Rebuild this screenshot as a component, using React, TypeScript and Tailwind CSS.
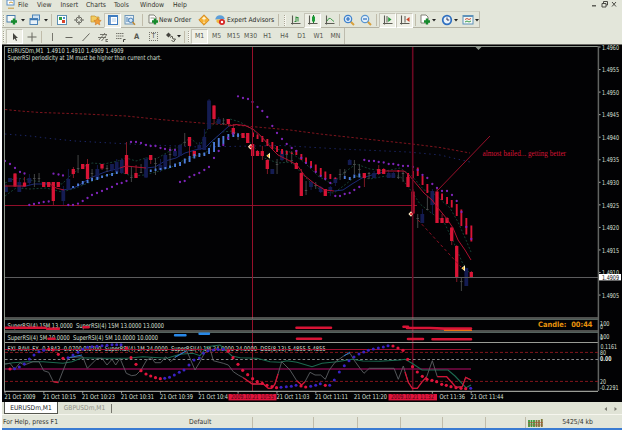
import React from "react";

const UI_FONT = "font-['DejaVu_Sans_Condensed','DejaVu_Sans',sans-serif]";

const RED = "#d81436";
const NAVY = "#141c52";
const GRAY = "#4a4c4c";

type Candle = [x: number, top: number, bottom: number, wickTop: number, wickBottom: number];

const redCandles: Candle[] = [
  [15, 173.5, 186.5, 173, 187],
  [24.5, 182.5, 186.5, 177, 187],
  [43.7, 182, 187, 182, 187],
  [48.7, 182, 187, 182, 187],
  [53.3, 182, 201, 182, 205],
  [58.3, 182, 187, 182, 187],
  [73.3, 169, 174, 167, 178],
  [82.7, 164, 169, 164, 169],
  [87.5, 164, 179, 159, 180],
  [102, 164, 168.5, 164, 170],
  [126.5, 155, 174, 142, 174],
  [136, 173, 178, 165, 178],
  [150.7, 155, 160, 155, 164],
  [189.5, 137, 146, 137, 156],
  [194.3, 151, 156, 151, 156],
  [214, 105.5, 119, 105, 124],
  [228.3, 119, 124, 119, 126],
  [233.3, 128, 134, 124, 136],
  [243, 133, 138, 133, 138],
  [247.7, 133, 143, 133, 143],
  [252.6, 144, 156, 144, 156],
  [257.5, 151, 156, 150, 156],
  [262.3, 151, 156, 146, 160],
  [267.3, 160, 169, 159, 174],
  [296.3, 163, 169, 162, 169],
  [301.3, 173, 196, 169, 196],
  [325.3, 189, 196, 189, 196],
  [364.3, 173, 178, 173, 187],
  [378.7, 169, 174, 165, 175],
  [383.7, 169, 174, 168, 174],
  [408, 177, 187, 177, 187],
  [413, 191.5, 213.5, 189, 214],
  [437, 191.5, 223, 189, 223],
  [442, 218, 223, 214, 223],
  [447, 218, 223, 217, 223],
  [451.7, 227.5, 241, 227, 245],
  [456.7, 246, 277, 245, 282],
  [471.3, 272, 277, 271, 278],
];

const navyCandles: Candle[] = [
  [6, 186.5, 192, 184, 192],
  [10, 178, 182, 178, 182],
  [19.3, 182, 192, 178, 192],
  [29.3, 178, 183, 174, 186],
  [63.3, 190, 201, 186, 205],
  [68.3, 179, 190, 169, 190],
  [97.3, 169, 179, 165, 179],
  [112, 164, 170, 164, 172],
  [116.7, 162, 172, 159, 172],
  [121.7, 160, 173, 158, 174],
  [146, 159, 177.5, 157, 178],
  [160.5, 165, 170, 159, 172],
  [165.3, 155, 169, 154, 170],
  [175, 151, 156, 150, 157],
  [180, 145, 156, 144, 156],
  [199.3, 145, 150, 142, 150],
  [204.3, 137, 150, 129, 150],
  [209, 100.5, 129, 99, 129],
  [218.7, 119, 124, 117, 124],
  [272.3, 169, 174, 169, 174],
  [282, 151, 160, 150, 161],
  [311, 182, 187, 181, 190],
  [320.7, 187, 192, 186, 193],
  [330.3, 187, 191, 186, 196],
  [335.3, 178, 183, 177, 186],
  [349.7, 160, 165, 159, 165],
  [374, 173, 178, 171, 178],
  [388.7, 173, 178, 171, 178],
  [393.3, 173, 178, 172, 178],
  [422.3, 214, 223, 209, 223],
  [432.3, 191, 205, 189, 214],
  [466.3, 268, 286, 268, 286],
];

const grayCandles: Candle[] = [
  [34.3, 178, 179, 174, 187],
  [39, 178, 179, 173, 182],
  [78, 168, 169, 155, 173],
  [92, 173, 174, 169, 178],
  [107, 168, 169, 165, 172],
  [131.3, 177, 178, 167, 182],
  [141, 172, 173, 164, 173],
  [155.5, 163, 164, 158, 175],
  [170, 154, 155, 147, 167],
  [184.7, 142, 143, 133, 146],
  [223.3, 123, 124, 118, 125],
  [238, 135, 136, 133, 140],
  [277, 164, 165, 159, 174],
  [286.7, 154, 155, 150, 162],
  [291.7, 160, 161, 151, 164],
  [306, 190, 191, 181, 195],
  [315.7, 185, 186, 182, 189],
  [340, 174, 175, 169, 180],
  [344.7, 172, 173, 169, 177],
  [354.3, 164, 165, 160, 174],
  [359.3, 169, 170, 164, 175],
  [369, 173, 174, 172, 179],
  [398.3, 177, 178, 171, 179],
  [403, 173, 174, 171, 182],
  [417.7, 218, 219, 214, 228],
  [427.3, 209, 210, 196, 210],
  [461.3, 281, 282, 277, 291],
];

// x, top, bottom
const blueRibbon = [
  [73, 186, 188], [78, 183.5, 186], [82.7, 181, 184.5], [87.5, 180, 183], [92, 178, 181],
  [97.3, 177, 180], [102, 175.5, 178], [107, 174, 176.5], [112, 173, 176], [116.7, 171.5, 174],
  [150.7, 169.5, 172], [155.5, 168.5, 171], [160.5, 168, 170], [165.3, 167, 169], [170, 165.5, 168],
  [175, 163.5, 167], [180, 162, 166], [184.7, 158.5, 163.5], [189.5, 156, 162], [194.3, 154, 158.5],
  [199.3, 153, 157], [204.3, 152.5, 156], [209, 148, 154], [214, 142, 152], [218.7, 138, 147],
  [223.3, 136, 144], [228.3, 134, 140], [233.3, 132.5, 137], [238, 133.5, 137], [344.7, 176, 179],
  [349.7, 177, 180], [354.3, 174.5, 178], [359.3, 173.5, 177.5],
];

const redRibbon = [
  [253, 132.5, 137], [257.5, 134.5, 139], [262.3, 136, 142], [267.3, 139, 146], [272.3, 142, 149],
  [277, 146, 152], [282, 149, 154], [286.7, 151, 154], [291.7, 152.5, 154], [296.3, 150, 155], [301.3, 154, 160],
  [306, 157.5, 163], [311, 161, 167], [315.7, 164.5, 172], [320.7, 168, 176], [325.3, 171.5, 179],
  [330.3, 174, 179], [335.3, 177.5, 179], [398.3, 170, 172], [408, 173, 186], [413, 171, 178],
  [417.7, 167.5, 176], [422.5, 176, 185], [427.3, 184, 193], [437, 192, 196], [442, 193.5, 200],
  [447, 197, 204], [451.7, 200, 207.5], [456.7, 204, 216], [461.3, 209.5, 226], [466.3, 218, 234.5],
  [471.3, 225.5, 241.5],
];

const sarDots = [
  [5, 161], [10, 164], [15, 168], [20, 172], [24.5, 173.5], [53.5, 173.7], [58.5, 174.5], [63, 175.5],
  [29.3, 205], [34, 204], [39, 203], [43.7, 202], [48.7, 201.5], [68.3, 205], [73, 205], [78, 203.7],
  [82.7, 201], [87.5, 198], [92, 195], [97, 193], [102, 191], [107, 189], [112, 187], [117, 184],
  [121.7, 183], [126.5, 181], [131, 142], [136, 142], [141, 143], [146, 145], [150.7, 146], [155.5, 146],
  [160.5, 148], [165, 149], [170, 150], [175, 150], [180, 182], [184.7, 181], [189.5, 177], [194.3, 175],
  [199.3, 173], [204.3, 170], [209, 167], [214, 158], [218.7, 151], [223.3, 145], [228, 138], [233, 134],
  [238, 96.3], [243, 98], [248, 99], [252.5, 102], [257.5, 107], [262.3, 111], [267.3, 117], [272.3, 126],
  [277, 133], [282, 139], [286.7, 144], [291.7, 148], [296.3, 151], [301.3, 158], [306, 163], [311, 167],
  [315.7, 172], [320.7, 176], [325.3, 179], [330.3, 183], [335.3, 196], [340, 196], [344.7, 194],
  [349.7, 193], [354.3, 190], [359.3, 187], [364.3, 160], [369, 161], [374, 161], [378.7, 162],
  [383.7, 162.5], [388.7, 164], [393.3, 164], [398.3, 165], [403, 166], [408, 166], [413, 167],
  [417.7, 170], [422.5, 175], [427.3, 178], [432.3, 184], [437, 188], [442, 191], [447, 191], [452, 195],
  [456.7, 201], [461.5, 212], [466.3, 227], [471.3, 239],
];

const dssRed = [
  [10, 369], [48.7, 349], [53.3, 350], [58.3, 354.3], [63, 358.3], [126.5, 348], [131, 357.7], [136, 364.3], [141, 370.7],
  [146, 374], [150.7, 376], [155.5, 377.7], [160.3, 378.7], [228.3, 351.3], [233, 357.7], [238, 364.3],
  [242.7, 370.3], [247.7, 374.7], [252.6, 378.7], [257.3, 381.7], [262.3, 383.3], [267, 385.3],
  [272, 386.7], [276.5, 387.7], [301, 386], [305.7, 387], [325.3, 385.3], [393, 346], [398, 348],
  [403, 350.3], [407.7, 359.3], [412.5, 366.7], [417.3, 372], [422.3, 376.3], [427, 379.3], [432, 380.3],
  [436.7, 381.7], [441.7, 384.3], [446.3, 385.3], [451, 386.7], [456, 387.7], [461, 388.3], [465.7, 388.7],
];

const dssBlue = [
  [14.5, 368.7], [19.3, 367], [24.3, 364], [29.3, 359], [34, 355], [39, 351.7], [43.7, 350.3], [68, 357.7],
  [73, 355], [78, 352.3], [82.7, 349.3], [87.5, 347.3], [92, 346.7], [97, 346.3], [102, 345.7],
  [107, 345.3], [112, 344.7], [116.7, 344.7], [121, 344.7], [164.7, 378.3], [169.5, 377.3], [174.3, 375],
  [179.3, 372.3], [184, 370], [189, 365], [194, 360], [199.3, 358], [203.5, 353.3], [208, 350.7],
  [213.3, 350], [218, 349.3], [223.3, 349.3], [281, 387.3], [286.3, 386.7], [291.3, 386.3], [296, 385.3],
  [310.7, 386.3], [315.7, 385.3], [320.3, 383.7], [329.7, 385.3], [334.3, 380], [339.3, 372],
  [344.3, 365.7], [349, 360.7], [354, 357], [359, 354], [363.7, 352], [368.3, 350.3], [373.3, 349],
  [378.3, 348], [383.3, 347], [388, 345.7], [470.7, 388.3],
];

const priceLabels = [
  "1.4960", "1.4955", "1.4950", "1.4945", "1.4940", "1.4935",
  "1.4930", "1.4925", "1.4920", "1.4915", "1.4910", "1.4905",
];

const timeLabels: [number, string, number][] = [
  [4.5, "21 Oct 2009", 31],
  [43, "21 Oct 10:15", 33],
  [82, "21 Oct 10:23", 33],
  [121, "21 Oct 10:31", 33],
  [160, "21 Oct 10:39", 33],
  [198.5, "21 Oct 10:4", 29.5],
  [276.5, "21 Oct 11:03", 33],
  [315, "21 Oct 11:11", 33],
  [354, "21 Oct 11:20", 33],
  [439.5, "Oct 11:36", 25.5],
  [470.5, "21 Oct 11:44", 33],
];

interface LabelProps {
  x: number;
  y: number;
  w: number;
  children: string;
  fill?: string;
  size?: number;
  className?: string;
}

const Label: React.FC<LabelProps> = ({
  x,
  y,
  w,
  children,
  fill = "#dfe1dc",
  size = 6.7,
  className,
}) => (
  <text
    x={x}
    y={y + 2.4}
    fill={fill}
    fontSize={size}
    textLength={w}
    lengthAdjust="spacingAndGlyphs"
    className={className}
    xmlSpace="preserve"
  >
    {children}
  </text>
);

const Candles: React.FC<{ data: Candle[]; color: string; wick?: string; width?: number }> = ({
  data,
  color,
  wick = color,
  width = 3,
}) => (
  <>
    {data.map(([x, top, bottom, wt, wb]) => (
      <g key={x}>
        <rect x={x - 0.4} y={wt} width={0.9} height={wb - wt} fill={wick} />
        <rect x={x - width / 2} y={top} width={width} height={bottom - top} fill={color} />
      </g>
    ))}
  </>
);

const Bars: React.FC<{ data: number[][]; color: string }> = ({ data, color }) => (
  <>
    {data.map(([x, top, bottom]) => (
      <rect key={x} x={x - 0.9} y={top} width={1.9} height={bottom - top} fill={color} />
    ))}
  </>
);

const Dots: React.FC<{ data: number[][]; color: string; r: number }> = ({ data, color, r }) => (
  <>
    {data.map(([x, y]) => (
      <circle key={`${x}-${y}`} cx={x} cy={y} r={r} fill={color} />
    ))}
  </>
);

const TradeArrow: React.FC<{ x: number; y: number }> = ({ x, y }) => (
  <>
    <path d={`M${x + 2} ${y - 3}v6l-3.6-3z`} fill="#fff6c8" />
    <path d={`M${x + 1} ${y - 1.5}v3l-2-1.5z`} fill="#f0a818" />
  </>
);

const Entry: React.FC<{ x: number; y: number }> = ({ x, y }) => (
  <>
    <path d={`M${x - 2.6} ${y}l2.6-2.8 2 2.8-2 2.8z`} fill="#ffe9c0" />
    <circle cx={x + 0.4} cy={y} r={1.3} fill="#e02030" />
  </>
);

const Chart = () => (
  <svg
    viewBox="2 44 620 358"
    className="block h-[358px] w-[620px] shrink-0 font-['DejaVu_Sans_Condensed','DejaVu_Sans',sans-serif]"
    fill="none"
  >
    <rect x="2" y="44" width="620" height="358" fill="#020204" />
    <path d="M2 44.5h620" stroke="#6b6b66" />

    {/* levels and long averages */}
    <path d="M5 205.5H417" stroke="#900e2a" />
    <path
      d="M5 109.5L20 111 40 112.5 85 114 126 116 160 119.5 207 123.5 240 125.5 290 130 320 134 366 139 412 144 440 147.5 470 153"
      stroke="#8c1620"
      strokeWidth="0.9"
      strokeDasharray="2.4 2"
    />
    <path
      d="M5 134L30 136 50 138.5 75 141 120 143.5 140 144.5 200 147 282 145.5 340 149 408 152 440 155 470 162"
      stroke="#1c2668"
      strokeWidth="1"
      strokeDasharray="1.4 3.6"
    />
    <g stroke="#1a5040" strokeWidth="0.8" strokeDasharray="2 1.8">
      <path d="M5 183L16 178 30 180 46 183 62 184 70 176 80 168 92 163 104 164 118 161 126 158 136 161 146 158 156 159 168 152 178 147 190 138 200 146 207 130 216 122 230 119 240 122 250 128 262 138 276 149 290 152 304 162 318 176 332 184 345 172 356 164 370 169 385 171 400 168 412 176 424 190 432 192 440 199 450 208 458 222 466 240 471 252" />
      <path d="M5 196L16 188 30 189 46 188 62 192 76 188 88 183 104 176 120 172 132 176 144 175 156 172 170 168 182 161 196 156 206 153 214 140 222 132 232 131 244 136 254 147 264 158 278 163 292 162 302 174 312 184 324 192 334 193 346 184 356 176 370 179 386 176 400 176 412 192 420 204 430 212 444 222 454 243 462 262 470 274" />
    </g>
    <g stroke="#1c2a78" strokeWidth="1">
      <path d="M22 187L34 184 50 184M62 190L70 189 78 186 90 178 105 172 120 168M146 168L155 167 165 161 176 158 185 153 195 150 205 148 212 141 220 134 229 126M334 191L343 190 352 184 362 178 375 174 385 172" />
    </g>
    <Candles data={grayCandles} color={GRAY} width={2.4} />
    <Candles data={navyCandles} color={NAVY} width={3.8} />
    <Candles data={redCandles} color={RED} wick="#8c1c2a" width={3.3} />
    <Bars data={blueRibbon} color="#4c7cd8" />
    <Bars data={redRibbon} color={RED} />
    <Dots data={sarDots} color="#7e24b8" r={1.15} />
    <g stroke="#b01030" strokeWidth="1">
      <path d="M5 186H23M50 184L56 188 64 190M120 168L126 166 136 167 146 168M229 126L236 124.5 245 125.5 253 129 262 137 272 149 278 155 290 161 297 165 305 176 315 184 325 190 334 191M385 171L404 171 409 175 413 180 424 193 432 200 438 208 447 219 453 228 458 240 465 250 471 260" />
    </g>
    <path d="M418 220L461 267" stroke="#8c1024" strokeDasharray="3 2.6" />
    <path d="M437 191L490 136" stroke="#98102a" />

    <path d="M5 277.5H598" stroke="#5c5c5e" />
    <path d="M252.5 46V391" stroke="#96102a" />
    <path d="M412.7 46V391" stroke="#6c0822" strokeWidth="1.6" />
    <Entry x={250.5} y={146.7} />
    <Entry x={411} y={214} />
    <TradeArrow x={268} y={155.7} />
    <TradeArrow x={463} y={268.3} />

    <Label x={7.5} y={51} w={116}>
      {"EURUSDm,M1  1.4910 1.4910 1.4909 1.4909"}
    </Label>
    <Label x={7.5} y={57.6} w={154}>
      SuperRSI periodicity at 1M must be higher than current chart.
    </Label>
    <Label
      x={482.5}
      y={153.6}
      w={83.5}
      size={7.8}
      fill="#d81234"
      className="font-['Liberation_Serif',serif]"
    >
      almost bailed... getting better
    </Label>

    {/* oscillator strips */}
    <Label x={7.5} y={325.6} w={156.5}>
      {"SuperRSI(4) 15M 13.0000  SuperRSI(4) 15M 13.0000 13.0000"}
    </Label>
    <Label x={7.5} y={338} w={150.5}>
      {"SuperRSI(4) 5M 10.0000  SuperRSI(4) 5M 10.0000 10.0000"}
    </Label>
    <Label x={7.5} y={348.6} w={318}>
      {"FXI_RAVI_FX -0.1843 -0.0700 0.0700  SuperRSI(4) 1M 24.0000  SuperRSI(4) 1M 24.0000 24.0000  DSS(8,13) 5.4855 5.4855"}
    </Label>
    <g stroke="#9a9c96">
      <path d="M4 318H598M4 331H598M4 342.5H598M4 391.3H598" strokeWidth="1.2" />
      <path d="M4 319.3H598M4 332.3H598" stroke="#55625e" strokeWidth="1.2" />
      <path d="M4.5 46V391M4 46.5H598" stroke="#8e968c" />
      <path d="M598.4 46V391" stroke="#626462" strokeWidth="1.5" />
    </g>
    <g stroke={RED} strokeWidth="2.6" strokeLinecap="round">
      <path d="M6 327.7H45M47 328.7H59M83.5 327.3H88.5M296.5 327.7H331M403.5 326.7H408" />
      <path d="M407 328H430L444 328.6H471M48.5 338.7H54.5M297 338.7H321M408 339H423M432.5 339.3H471" />
    </g>
    <path d="M444 330.4H472" stroke="#ee7014" strokeWidth="1.2" />
    <g stroke="#2888e8" strokeWidth="2.4" strokeLinecap="round">
      <path d="M175 335.2H185.5M199.5 333.8H209" />
    </g>
    <Label x={538} y={325} w={54.5} size={7.4} fill="#e8920c" className="font-bold">
      {"Candle:  00:44"}
    </Label>

    {/* RAVI / DSS window */}
    <path d="M5 349.5H471" stroke="#9c1030" />
    <path d="M5 369H471" stroke="#7c0a48" strokeWidth="1.4" />
    <path d="M5 352.4H598M5 381.4H598" stroke="#82161c" strokeDasharray="3 2" />
    <path d="M5 359.5H598" stroke="#85878a" strokeDasharray="2.6 2.2" />
    <path
      d="M5 364L13 362.7 27 361.7 43 361.7 63 363.3 72 361.7 82 357.7 100 358.3 127 358.3 143 356.7 167 358.3 180 354.3 193 353.3 200 355.7 207 346.7 220 345 232 356 240 357.7 257 358.3 270 361.7 280 362.3 287 360.7 297 362.3 312 366.7 322 363.3 337 361.7 352 359.3 363 361 380 361.3 400 360 405 359.3 412 363.3 422 370 448 370 455 376 466 387.7 471 385"
      stroke="#1c6a50"
      strokeWidth="1.1"
    />
    <path
      d="M5 364L10 363.3 14.7 369.3 20 362.7 24.3 365 33 361.7 39 361.7 43.7 370.7 48.7 372.3 53.3 381.7 58.3 382.7 63.3 370 68.3 357.7 82.7 356.7 87.3 368.3 97.3 358.3 102 358.3 107 365 112 359.3 115.7 365 120 358.3 126.3 373.3 131.7 375.7 136 375 141 370 146.7 360 151.7 357.7 155 362.7 160.7 362.7 165.7 356.7 170.7 361.7 175 357.3 186.7 350.7 195 370 200 361.7 204.3 353.3 210 348.3 213.3 360.7 223.3 363.3 228.3 365 233.3 371.7 238.3 375 243.3 377.7 252.3 384 263.3 384 268.3 388.3 271.7 388.3 275 384 281.7 361.7 290 370 296.7 380.7 301.7 385 305 381.7 310 372.3 315 375 320.7 375 325.3 379.3 329.3 370 335 362.3 345 355 350 353.3 354 360 360 368.3 364 373.3 369.3 368.3 394 368.3 398.3 379.3 403.3 366 408.3 382.3 412.3 388.3 417.3 388.3 421.7 382.3 426.7 376.7 432.3 360.7 437.3 376.7 446.7 376.7 456 387.3 462.3 386.7 465.7 377.3 471 380"
      stroke="#5c6063"
      strokeWidth="0.9"
    />
    <g stroke="#d01234" strokeWidth="1.3">
      <path d="M53.3 381.7L58.3 382.7M243.3 377.7L252.3 384 263.3 384 268.3 388.3 271.7 388.3 275 384 278 374M296.7 380.7L301.7 385 305 381.7M405 372L408.3 382.3 412.3 388.3 417.3 388.3 421.7 382.3 426.7 376.7M437.3 376.7L446.7 376.7 456 387.3 462.3 386.7 465.7 377.3 471 380" />
    </g>
    <path d="M68.3 357.7L82 355M175 357.3L186 351M344 356L350 352" stroke="#2878d0" />
    <Dots data={dssRed} color="#e0143c" r={1.6} />
    <Dots data={dssBlue} color="#3a22c4" r={1.5} />

    {/* price axis */}
    {priceLabels.map((p, i) => (
      <g key={p}>
        <path d={`M599 ${47 + i * 22.55}h1.6`} stroke="#a0a29e" />
        <Label x={602} y={47.3 + i * 22.55} w={17}>
          {p}
        </Label>
      </g>
    ))}
    <rect x="599" y="274" width="22" height="6.4" fill="#ffffff" />
    <Label x={602} y={277.2} w={17} fill="#111111">
      1.4909
    </Label>
    <Label x={600} y={323.8} w={9.5}>
      100
    </Label>
    <Label x={600} y={326.2} w={3}>
      0
    </Label>
    <Label x={600} y={336.4} w={9.5}>
      100
    </Label>
    <Label x={600} y={337.2} w={3}>
      0
    </Label>
    <Label x={600.5} y={347} w={16.5}>
      0.1161
    </Label>
    <Label x={600} y={352.7} w={6}>
      80
    </Label>
    <Label x={600} y={359} w={11.5} className="font-bold">
      0.00
    </Label>
    <Label x={600} y={381.6} w={6}>
      20
    </Label>
    <Label x={600} y={387.4} w={18.5}>
      -0.2291
    </Label>
    <path d="M475 46.5h7l-3.5 3.5z" fill="#8e968c" />

    {/* time axis */}
    {timeLabels.map(([x, t, w], i) => (
      <g key={t}>
        <path d={`M${5 + (i > 8 ? i + 2 : i) * 38.85} 391v2.6`} stroke="#a0a29e" />
        <Label x={x} y={397} w={w}>
          {t}
        </Label>
      </g>
    ))}
    <rect x="228.5" y="394" width="48" height="6.4" fill="#e0143c" />
    <rect x="388.5" y="394" width="48.5" height="6.4" fill="#e0143c" />
    <Label x={231} y={397} w={43} fill="#4c0410">
      2009.10.21 10:55
    </Label>
    <Label x={391} y={397} w={43} fill="#4c0410">
      2009.10.21 11:32
    </Label>
  </svg>
);

const Icon: React.FC<{ children: React.ReactNode }> = ({ children }) => (
  <svg viewBox="0 0 12 12" className="h-3 w-3 shrink-0" fill="none">
    {children}
  </svg>
);

const Slot: React.FC<{ children: React.ReactNode; pressed?: boolean }> = ({ children, pressed }) => (
  <div
    className={`flex h-[15px] w-[17px] shrink-0 items-center justify-center ${
      pressed ? "border border-[#c6c5b8] border-r-white border-b-white bg-[#eff0e7]" : ""
    }`}
  >
    {children}
  </div>
);

const Caret = () => (
  <svg viewBox="0 0 4 3" className="h-[3px] w-1 shrink-0">
    <path d="M0 0h4L2 2.6z" fill="#222" />
  </svg>
);

const Sep: React.FC<{ className: string }> = ({ className }) => (
  <div className={`flex h-3 shrink-0 justify-center ${className}`}>
    <div className="w-px bg-[#c0bcaa]" />
  </div>
);

const Grip: React.FC<{ className: string }> = ({ className }) => (
  <div className={`flex h-[11px] shrink-0 justify-center ${className}`}>
    <div className="w-0.5 border-l border-dotted border-[#a8a594] bg-[#f4f4ec]" />
  </div>
);

const axes = <path d="M2.5 1.5v9M1 9.5h9.5" stroke="#5c5c54" strokeWidth="1.1" />;
const plus = <path d="M8 4.5v6M5 7.5h6" stroke="#168a2c" strokeWidth="2.4" />;

const MenuBar = () => (
  <div className="flex h-[11px] shrink-0 items-start pl-1 text-[6.8px] leading-[11px] text-[#33342e]">
    <svg viewBox="0 0 9 9" className="mr-[3px] h-[9px] w-[9px]" fill="none">
      <rect x="1" y="0" width="7" height="5" fill="#fff" stroke="#5d90c4" />
      <path d="M2 8.2h6M3 3l2-1 2 1" stroke="#c89a3c" />
    </svg>
    <span className="w-[19px]">File</span>
    <span className="w-[23.5px]">View</span>
    <span className="w-[25.5px]">Insert</span>
    <span className="w-7">Charts</span>
    <span className="w-[26px]">Tools</span>
    <span className="w-[33px]">Window</span>
    <span>Help</span>
    <svg viewBox="0 0 29 9" className="mr-1 ml-auto h-[9px] w-[29px]" fill="none" stroke="#4a4a44">
      <path d="M3 5.8h4" strokeWidth="1.3" />
      <path d="M13 3.5h4v3.5h-4zM14.5 3.5v-2h4V5h-1.5M23 2l4 4.5M27 2l-4 4.5" />
    </svg>
  </div>
);

const StandardBar = () => (
  <div className="flex h-[17px] w-[478px] shrink-0 items-center border-y border-r border-t-[#cfd0c2] border-r-[#bdbcae] border-b-[#b4b3a4] pt-px text-[6.7px] text-[#26261f]">
    <Grip className="w-1" />
    <div className="flex w-[21px] items-center gap-[3px]">
      <Icon>
        <rect x="1" y="1.5" width="8" height="6.5" fill="#f6f8f6" stroke="#4d7fae" />
        {plus}
      </Icon>
      <Caret />
    </div>
    <div className="flex w-[22px] items-center gap-[3px] pl-[2px]">
      <Icon>
        <rect x="3.5" y="1" width="7" height="5" fill="#cfe2f2" stroke="#4d84b8" />
        <rect x="1" y="4.5" width="7.5" height="6" fill="#e8f1f8" stroke="#4d84b8" />
        <path d="M1 5.5h7.5" stroke="#3d78b4" strokeWidth="1.5" />
      </Icon>
      <Caret />
    </div>
    <Sep className="w-[4px]" />
    <Slot>
      <Icon>
        <rect x="1.5" y="1.5" width="9" height="9" fill="#fff" stroke="#5d8fb4" />
        <path d="M3 3h3v3H3z" fill="#2f9c40" />
        <path d="M6 6h3v3H6z" fill="#d8442c" />
        <path d="M7 3h2v2H7z" fill="#4b89cc" />
      </Icon>
    </Slot>
    <Slot>
      <Icon>
        <circle cx="6" cy="6" r="3" stroke="#6c6c64" />
        <path d="M6 1v4M6 7v4M1 6h4M7 6h4" stroke="#6c6c64" />
      </Icon>
    </Slot>
    <Slot>
      <Icon>
        <path d="M1 2h4l1 1h3v5H1z" fill="#f2cc60" stroke="#c49028" strokeWidth=".7" />
        <path
          d="M7.5 3.8l1.1 2.4 2.6.3-1.9 1.8.5 2.6-2.3-1.3-2.3 1.3.5-2.6-1.9-1.8 2.6-.3z"
          fill="#ef9e3a"
          stroke="#c86c18"
          strokeWidth=".5"
        />
      </Icon>
    </Slot>
    <Slot pressed>
      <Icon>
        <rect x="1.5" y="1.5" width="9" height="9" fill="#fff" stroke="#3f7cc0" />
        <path d="M2 2.3h8M3 2v8" stroke="#3f7cc0" strokeWidth="1.5" />
        <path d="M5 5h4M5 7h4" stroke="#b8d0e8" />
      </Icon>
    </Slot>
    <Slot>
      <Icon>
        <rect x="1" y="1.5" width="8.5" height="8.5" fill="#e4eef6" stroke="#6f97b8" />
        <path d="M3 3v5M5 4v4" stroke="#4a80b4" />
        <circle cx="6.8" cy="6.3" r="2.2" fill="#cfe6fa" stroke="#4a80b4" />
        <path d="M8.5 8l2.5 2.7" stroke="#c08830" strokeWidth="1.4" />
      </Icon>
    </Slot>
    <Sep className="w-[9px]" />
    <Icon>
      <path d="M2 1h5l2 2v6H2z" fill="#fff" stroke="#77776c" strokeWidth=".9" />
      <path d="M3.5 4h4" stroke="#99998c" />
      {plus}
    </Icon>
    <span className="w-9 whitespace-nowrap">New Order</span>
    <Slot>
      <Icon>
        <path d="M6 .8L11.2 6 6 11.2.8 6z" fill="#f4ae30" stroke="#cc7c18" strokeWidth=".8" />
        <path d="M6 3.4v3.2M6 7.6V9M4.4 5l1.6-1.6L7.6 5" stroke="#fff4d0" strokeWidth="1.1" />
      </Icon>
    </Slot>
    <div className="flex w-[15px] shrink-0 justify-center">
      <Icon>
        <path d="M1.2 5.5Q2 1.2 6 1.2T10.8 5z" fill="#5d9ed8" />
        <path d="M2.5 5.5h6.5V8q-3 3-6.5 0z" fill="#eeb840" />
        <circle cx="8" cy="8" r="3" fill="#d62424" />
        <rect x="6.9" y="6.9" width="2.2" height="2.2" fill="#fff" />
      </Icon>
    </div>
    <span className="w-12 whitespace-nowrap">Expert Advisors</span>
    <Sep className="w-[7px]" />
    <Grip className="w-[5px]" />
    <Slot>
      <Icon>
        {axes}
        <path d="M4.5 7.5H6M6 2.5v5.5M6 3.5h2M8 3v4.5" stroke="#2c8a3a" />
      </Icon>
    </Slot>
    <Slot pressed>
      <Icon>
        {axes}
        <path d="M6.5 1v8" stroke="#147a28" />
        <rect x="5" y="2.5" width="3" height="5" fill="#1e9c38" />
      </Icon>
    </Slot>
    <Slot>
      <Icon>
        {axes}
        <path d="M3 7q2-4 3.5-2.5T10 7.5" stroke="#3b9c48" />
      </Icon>
    </Slot>
    <Sep className="w-0.5" />
    <Slot>
      <Icon>
        <path d="M7.5 7.5L11 11" stroke="#d8a03c" strokeWidth="2" />
        <circle cx="5" cy="5" r="3.7" fill="#d4e8fa" stroke="#3f82cc" strokeWidth="1.2" />
        <path d="M5 3v4M3 5h4" stroke="#2c6cbc" strokeWidth="1.2" />
      </Icon>
    </Slot>
    <Slot>
      <Icon>
        <path d="M7.5 7.5L11 11" stroke="#d8a03c" strokeWidth="2" />
        <circle cx="5" cy="5" r="3.7" fill="#e2effa" stroke="#5a96d0" strokeWidth="1.2" />
        <path d="M3 5h4" stroke="#2c6cbc" strokeWidth="1.2" />
      </Icon>
    </Slot>
    <Sep className="w-[5px]" />
    <Slot pressed>
      <Icon>
        {axes}
        <path d="M5 2v6.5" stroke="#5c5c54" />
        <path d="M6.2 3l3.3 2.4L6.2 8z" fill="#2a9a3c" />
      </Icon>
    </Slot>
    <Slot pressed>
      <Icon>
        {axes}
        <path d="M6 2v6.5" stroke="#5c5c54" />
        <path d="M10.5 3L7.2 5.4 10.5 8z" fill="#cc4428" />
      </Icon>
    </Slot>
    <Sep className="w-1" />
    <div className="flex w-[21.5px] shrink-0 items-center gap-px pl-0.5">
      <Icon>
        <path d="M2 1h5l2 2v6H2z" fill="#fff" stroke="#77776c" strokeWidth=".9" />
        {plus}
      </Icon>
      <Caret />
    </div>
    <div className="flex w-[21.5px] shrink-0 items-center gap-px pl-0.5">
      <Icon>
        <circle cx="6" cy="6" r="4.3" fill="#eaf3fb" stroke="#2e6fc0" strokeWidth="1.7" />
        <path d="M6 3.5V6h2.2" stroke="#335" />
      </Icon>
      <Caret />
    </div>
    <div className="flex shrink-0 items-center gap-px pl-0.5">
      <Icon>
        <rect x="1" y="1.5" width="10" height="8.5" fill="#f4f8f4" stroke="#5f92ba" />
        <path d="M1 2.5h10" stroke="#5f92ba" />
        <path d="M3 5.5l2-1 2 1 2-1" stroke="#c84c34" />
        <path d="M3 8l2-1 2 1 2-1" stroke="#3b9c48" />
      </Icon>
      <Caret />
    </div>
  </div>
);

const timeframes = ["M1", "M5", "M15", "M30", "H1", "H4", "D1", "W1", "MN"];

const LineBar = () => (
  <div className="flex h-4 w-[343px] shrink-0 items-center border-r border-[#bdbcae] pt-px text-[6.8px] text-[#55564e]">
    <Grip className="w-1" />
    <Slot pressed>
      <Icon>
        <path d="M4 2v7l1.8-1.6L7 10l1-.5L6.9 7H9z" fill="#44443e" />
      </Icon>
    </Slot>
    <Slot>
      <Icon>
        <path d="M6 1.5v9M1.5 6h9" stroke="#66665e" />
      </Icon>
    </Slot>
    <Sep className="w-[3px]" />
    <Slot>
      <Icon>
        <path d="M6.5 2v8" stroke="#77776e" />
      </Icon>
    </Slot>
    <Slot>
      <Icon>
        <path d="M2.5 6.5h7" stroke="#66665e" />
      </Icon>
    </Slot>
    <Slot>
      <Icon>
        <path d="M2.5 10L9.5 2.5" stroke="#66665e" />
      </Icon>
    </Slot>
    <Slot>
      <Icon>
        <path
          d="M2 9l6-7M1 6.5h8M3 3.5h7M4.5 10l5-6M9 8.5h2M9 10.5h2M9 8v3"
          stroke="#66665e"
          strokeWidth=".9"
        />
      </Icon>
    </Slot>
    <Slot>
      <Icon>
        <path d="M2 2.5h8M2 5h8M2 7.5h6" stroke="#77776e" strokeDasharray="1.5 .5" />
        <path d="M9.5 11V8.5h2" stroke="#44443e" />
      </Icon>
    </Slot>
    <Slot>
      <span className="text-[7.5px] font-bold">A</span>
    </Slot>
    <Slot>
      <span className="flex h-[9px] w-[9px] items-center justify-center border border-dotted border-[#77776e] text-[7px]">
        T
      </span>
    </Slot>
    <div className="flex w-[22px] items-center pl-[3px]">
      <Icon>
        <path d="M1 4l2.5-2.5L6 4 3.5 6.5z" fill="#44443e" />
        <path d="M5 6.5l2-1.5 1 3h2.5L8.5 11 6.5 9" stroke="#55554c" />
      </Icon>
      <Caret />
    </div>
    <Sep className="w-[3px]" />
    <Grip className="w-[5px]" />
    {timeframes.map((tf) => (
      <Slot key={tf} pressed={tf === "M1"}>
        {tf}
      </Slot>
    ))}
  </div>
);

const TabBar = () => (
  <div className="flex h-[13px] shrink-0 items-start border-b border-[#f6f6ee] bg-[#e0e3d6] pl-0.5 text-[6.6px]">
    <div className="h-3 w-[54px] border-x border-b border-[#55564e] bg-white pt-px text-center leading-[11px] text-[#22231e]">
      EURUSDm,M1
    </div>
    <div className="mt-0.5 w-[54px] border-r border-[#77776e] text-center leading-[9px] text-[#8f9084]">
      GBPUSDm,M1
    </div>
    <svg viewBox="0 0 16 6" className="mt-1 mr-[3px] ml-auto h-1.5 w-4" fill="#77776e">
      <path d="M4 1v4L1.5 3zM11.5 1v4L14 3z" />
    </svg>
  </div>
);

const StatusBar = () => (
  <div className="flex h-[13px] shrink-0 items-center pt-0.5 text-[6.8px] text-[#33342e]">
    <span className="w-[187px] pl-px whitespace-nowrap">For Help, press F1</span>
    <span className="w-[61px]">Default</span>
    <Sep className="w-1" />
    <Sep className="ml-[57px] w-1" />
    <Sep className="ml-10 w-1" />
    <Sep className="ml-[39px] w-1" />
    <Sep className="ml-[38px] w-1" />
    <Sep className="ml-[39px] w-1" />
    <Sep className="ml-9 w-1" />
    <svg viewBox="0 0 15 8" className="ml-px h-2 w-[15px]" fill="none" strokeWidth="1.8">
      <path d="M1 1v7M3.5 1v7M6 1v7" stroke="#3c9a3c" />
      <path d="M8.5 1v7M11 1v7M13.8 0v8" stroke="#7c7a3c" />
      <path d="M0 3.5h15M0 6h15" stroke="#b24a34" strokeWidth=".6" />
    </svg>
    <span className="ml-auto pr-[29px] whitespace-nowrap">5425/4 kb</span>
  </div>
);

const App: React.FC = () => {
  return (
    <div className={`h-[430px] w-[625px] overflow-hidden bg-white pl-0.5 ${UI_FONT}`}>
      <div className="flex h-full w-[620px] flex-col bg-[#e3e6da]">
        <MenuBar />
        <StandardBar />
        <LineBar />
        <Chart />
        <TabBar />
        <StatusBar />
        <div className="h-0.5 bg-[#3a7bd2]" />
      </div>
    </div>
  );
};

export default App;
